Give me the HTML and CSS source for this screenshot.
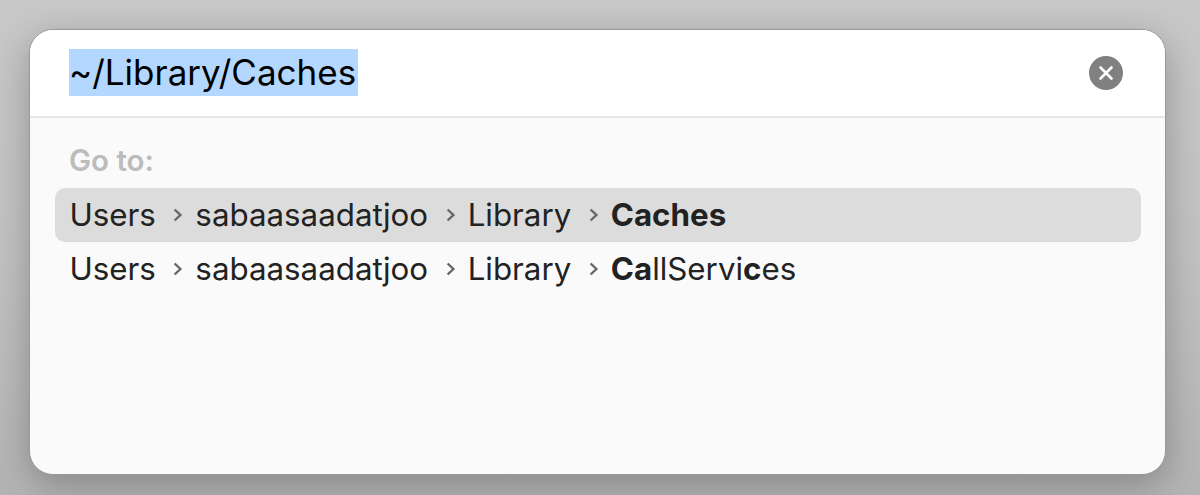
FILE: index.html
```html
<!DOCTYPE html>
<html>
<head>
    <meta charset="UTF-8">
    <title>Go to Folder</title>
    <link rel="stylesheet" href="styles.css">
</head>
<body>
    <div class="panel">
        <!-- search field -->
        <div class="field">
            <span class="field-text">~/Library/Caches</span>
            <button class="clear-btn" aria-label="Clear">
                <svg width="34" height="34" viewBox="0 0 34 34">
                    <circle cx="17" cy="17" r="17" fill="#808080"/>
                    <path d="M11.5 11.5 L22.5 22.5 M22.5 11.5 L11.5 22.5" stroke="#fff" stroke-width="2.6" stroke-linecap="round"/>
                </svg>
            </button>
        </div>

        <!-- results -->
        <div class="results">
            <div class="results-title">Go to:</div>
            <div class="row selected">
                <span class="crumb">Users</span>
                <svg class="chevron" width="10" height="16" viewBox="0 0 10 16"><path d="M1.6 2.5 L7.4 8 L1.6 13.5" fill="none" stroke="#666" stroke-width="2.4"/></svg>
                <span class="crumb">sabaasaadatjoo</span>
                <svg class="chevron" width="10" height="16" viewBox="0 0 10 16"><path d="M1.6 2.5 L7.4 8 L1.6 13.5" fill="none" stroke="#666" stroke-width="2.4"/></svg>
                <span class="crumb">Library</span>
                <svg class="chevron" width="10" height="16" viewBox="0 0 10 16"><path d="M1.6 2.5 L7.4 8 L1.6 13.5" fill="none" stroke="#666" stroke-width="2.4"/></svg>
                <span class="crumb"><b>Caches</b></span>
            </div>
            <div class="row">
                <span class="crumb">Users</span>
                <svg class="chevron" width="10" height="16" viewBox="0 0 10 16"><path d="M1.6 2.5 L7.4 8 L1.6 13.5" fill="none" stroke="#666" stroke-width="2.4"/></svg>
                <span class="crumb">sabaasaadatjoo</span>
                <svg class="chevron" width="10" height="16" viewBox="0 0 10 16"><path d="M1.6 2.5 L7.4 8 L1.6 13.5" fill="none" stroke="#666" stroke-width="2.4"/></svg>
                <span class="crumb">Library</span>
                <svg class="chevron" width="10" height="16" viewBox="0 0 10 16"><path d="M1.6 2.5 L7.4 8 L1.6 13.5" fill="none" stroke="#666" stroke-width="2.4"/></svg>
                <span class="crumb"><b>Ca</b>llServi<b>c</b>es</span>
            </div>
        </div>
    </div>
</body>
</html>
```

FILE: styles.css
```css
* {
    margin: 0;
    padding: 0;
    box-sizing: border-box;
}

body {
    font-family: Inter, "Liberation Sans", sans-serif;
    width: 1200px;
    height: 495px;
    overflow: hidden;
    padding: 29px 34px 20px 29px;
    background: linear-gradient(180deg, #c8c8c8 0%, #c2c2c2 50%, #b4b4b4 100%);
}

.panel {
    display: flex;
    flex-direction: column;
    height: 446px;
    background: #fafafa;
    border: 1px solid #999;
    border-radius: 24px;
    overflow: hidden;
    box-shadow: 0 10px 36px rgba(0, 0, 0, 0.26);
}

/* search field */
.field {
    display: flex;
    align-items: center;
    justify-content: space-between;
    height: 88px;
    padding: 0 42px 0 39px;
    background: #fff;
    border-bottom: 2px solid #e6e6e6;
}

.field-text {
    margin-top: -1px;
    padding: 0 2px 0 0;
    font-size: 35px;
    line-height: 47px;
    color: #000;
    background: #b3d7ff;
}

.clear-btn {
    display: flex;
    border: none;
    background: none;
}

/* results */
.results {
    padding: 24px 24px 0 25px;
}

.results-title {
    height: 46px;
    padding-left: 14px;
    font-size: 29.5px;
    line-height: 36px;
    font-weight: 600;
    color: #bcbcbc;
}

.row {
    display: flex;
    align-items: center;
    height: 54px;
    padding-left: 14.5px;
    border-radius: 10px;
    font-size: 31.3px;
    color: #222;
}

.row.selected {
    background: #dcdcdc;
}

.crumb b {
    font-weight: 700;
}

.chevron {
    flex: none;
    margin: 0 12px 0 17.5px;
}
```
